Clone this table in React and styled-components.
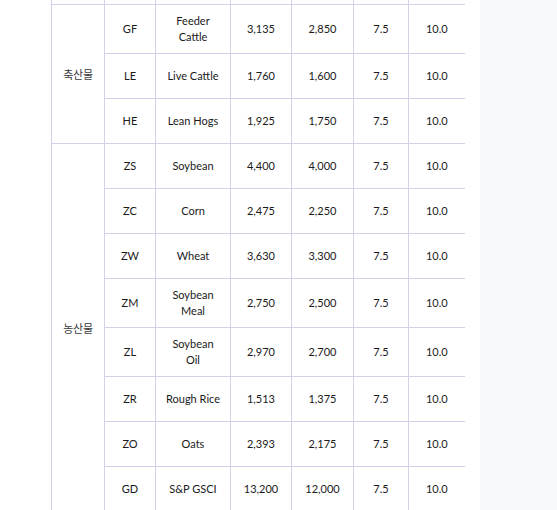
import React from "react";
import styled, { createGlobalStyle } from "styled-components";

const Global = createGlobalStyle`
  html, body { margin: 0; padding: 0; background: #fff; }
  body { font-family: Lato, "Noto Sans CJK KR", sans-serif; color: #222; }
`;

const Page = styled.div`
  display: flex;
  width: 557px;
  height: 510px;
  overflow: hidden;
`;

const Main = styled.main`
  width: 480px;
  flex: none;
  padding-left: 51px;
  box-sizing: border-box;
  background: #fff;
`;

const Aside = styled.aside`
  flex: 1;
  background: #f8f9fb;
`;

const Table = styled.table`
  border-collapse: collapse;
  table-layout: fixed;
  width: 413px;
  font-size: 11px;
  line-height: 16px;
`;

const Cell = styled.td`
  border: 1px solid #d3d0ea;
  border-right: ${(p) => (p.$last ? "none" : "1px solid #d3d0ea")};
  border-top: ${(p) => (p.$cut ? "none" : "1px solid #d3d0ea")};
  padding: ${(p) => (p.$cut ? "0" : "8px 2px")};
  height: ${(p) => (p.$cut ? "4px" : "28px")};
  text-align: center;
  vertical-align: middle;
  color: #1a1a1a;
`;

const GroupCell = styled(Cell)`
  font-family: "Noto Sans CJK KR", sans-serif;
  font-size: 11px;
  letter-spacing: -0.3px;
  color: #3a3a3a;
`;

const widths = [53, 51, 75, 61, 62, 55, 56];

const groups = [
  {
    name: "축산물",
    rows: [
      ["GF", ["Feeder", "Cattle"], "3,135", "2,850"],
      ["LE", ["Live Cattle"], "1,760", "1,600"],
      ["HE", ["Lean Hogs"], "1,925", "1,750"],
    ],
  },
  {
    name: "농산물",
    rows: [
      ["ZS", ["Soybean"], "4,400", "4,000"],
      ["ZC", ["Corn"], "2,475", "2,250"],
      ["ZW", ["Wheat"], "3,630", "3,300"],
      ["ZM", ["Soybean", "Meal"], "2,750", "2,500"],
      ["ZL", ["Soybean", "Oil"], "2,970", "2,700"],
      ["ZR", ["Rough Rice"], "1,513", "1,375"],
      ["ZO", ["Oats"], "2,393", "2,175"],
      ["GD", ["S&P GSCI"], "13,200", "12,000"],
    ],
  },
];

export default function App() {
  return (
    <>
      <Global />
      <Page>
        <Main>
          <Table>
            <colgroup>
              {widths.map((w, i) => (
                <col key={i} style={{ width: w }} />
              ))}
            </colgroup>
            <tbody>
              <tr>
                {widths.map((w, i) => (
                  <Cell key={i} $cut $last={i === widths.length - 1} />
                ))}
              </tr>
              {groups.map((g) =>
                g.rows.map((r, i) => (
                  <tr key={r[0]}>
                    {i === 0 && <GroupCell rowSpan={g.rows.length}>{g.name}</GroupCell>}
                    <Cell>{r[0]}</Cell>
                    <Cell>
                      {r[1].map((line, k) => (
                        <React.Fragment key={k}>
                          {k > 0 && <br />}
                          {line}
                        </React.Fragment>
                      ))}
                    </Cell>
                    <Cell>{r[2]}</Cell>
                    <Cell>{r[3]}</Cell>
                    <Cell>7.5</Cell>
                    <Cell $last>10.0</Cell>
                  </tr>
                ))
              )}
            </tbody>
          </Table>
        </Main>
        <Aside />
      </Page>
    </>
  );
}
